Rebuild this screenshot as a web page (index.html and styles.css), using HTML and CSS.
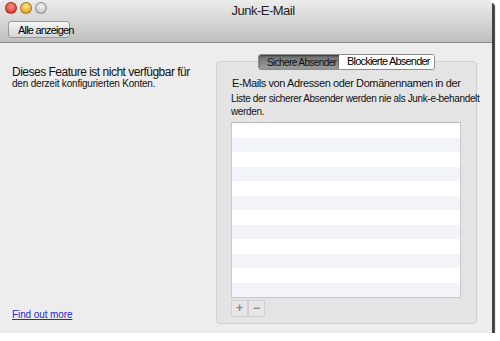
FILE: index.html
```html
<!DOCTYPE html>
<html lang="de">
<head>
    <meta charset="UTF-8">
    <title>Junk-E-Mail</title>
    <link rel="stylesheet" href="styles.css">
</head>
<body>
    <div class="window">
        <header class="toolbar">
            <div class="lights">
                <span class="light red"></span>
                <span class="light yellow"></span>
                <span class="light gray"></span>
            </div>
            <div class="title">Junk-E-Mail</div>
            <button class="tb-btn">Alle anzeigen</button>
        </header>

        <div class="content">
            <div class="side">
                <p class="notice">Dieses Feature ist nicht verfügbar für</p>
                <p class="notice-small">den derzeit konfigurierten Konten.</p>
                <a href="#" class="more">Find out more</a>
            </div>

            <div class="group">
                <div class="tabs">
                    <span class="tab active">Sichere Absender</span>
                    <span class="tab">Blockierte Absender</span>
                </div>
                <p class="info-1">E-Mails von Adressen oder Domänennamen in der</p>
                <p class="info-2">Liste der sicherer Absender werden nie als Junk-e-behandelt<br>werden.</p>
                <ul class="list">
                    <li></li><li></li><li></li><li></li><li></li><li></li>
                    <li></li><li></li><li></li><li></li><li></li><li></li>
                </ul>
                <div class="pm">
                    <button class="pm-btn">+</button>
                    <button class="pm-btn">&minus;</button>
                </div>
            </div>
        </div>
    </div>
</body>
</html>
```

FILE: styles.css
```css
body {
    margin: 0;
    background: #fff;
    font-family: 'Liberation Sans', Arial, sans-serif;
    color: #111;
}

.window {
    width: 492px;
    height: 333px;
    background: #ededed;
    border-radius: 4px 4px 0 0;
    box-shadow: 3px 3px 1px rgba(0, 0, 0, 0.75);
    display: flex;
    flex-direction: column;
    overflow: hidden;
}

.toolbar {
    position: relative;
    height: 42px;
    flex: none;
    background: linear-gradient(#ececec, #c0c0c0);
    border-bottom: 1px solid #8a8a8a;
}

.lights {
    position: absolute;
    left: 5px;
    top: 2px;
    display: flex;
    gap: 3px;
}

.light {
    width: 12px;
    height: 12px;
    border-radius: 50%;
    box-sizing: border-box;
    border: 1px solid rgba(0, 0, 0, 0.3);
}

.red { background: radial-gradient(circle at 50% 35%, #ff9c94, #e23b30 70%); }
.yellow { background: radial-gradient(circle at 50% 35%, #ffe49a, #e9a823 70%); }
.gray { background: radial-gradient(circle at 50% 35%, #f6f6f6, #c8c8c8 70%); }

.title {
    text-align: center;
    font-size: 13px;
    letter-spacing: -0.5px;
    padding-top: 3px;
    padding-left: 34px;
    color: #222;
}

.tb-btn {
    position: absolute;
    left: 8px;
    top: 21px;
    width: 62px;
    height: 17px;
    padding: 0 0 0 9px;
    text-align: left;
    white-space: nowrap;
    overflow: visible;
    font-family: inherit;
    font-size: 11px;
    letter-spacing: -0.8px;
    color: #000;
    border: 1px solid #9a9a9a;
    border-radius: 3px;
    background: linear-gradient(#f6f6f6, #d6d6d6);
}

.content {
    flex: 1;
    display: flex;
    padding: 0 15px 10px 12px;
}

.side {
    flex: none;
    width: 204px;
    display: flex;
    flex-direction: column;
    padding-top: 22px;
    white-space: nowrap;
}

.notice {
    margin: 0;
    font-size: 12px;
    line-height: 14px;
    letter-spacing: -0.5px;
}

.notice-small {
    margin: -1px 0 0;
    font-size: 10px;
    line-height: 12px;
    letter-spacing: -0.2px;
}

.more {
    margin-top: auto;
    margin-bottom: 4px;
    font-size: 10px;
    letter-spacing: -0.1px;
    color: #1a2bdc;
}

.group {
    position: relative;
    flex: 1;
    min-width: 0;
    margin-top: 18px;
    border: 1px solid #d0d0d0;
    border-radius: 4px;
    background: #e4e4e4;
    padding: 15px 15px 6px 14px;
    white-space: nowrap;
}

.tabs {
    position: absolute;
    top: -8px;
    left: 41px;
    display: flex;
    border: 1px solid #8c8c8c;
    border-radius: 3px;
    overflow: hidden;
}

.tab {
    height: 14px;
    line-height: 15px;
    background: #fff;
    color: #000;
    overflow: hidden;
}

.tab.active {
    width: 72px;
    padding-left: 8px;
    font-size: 10px;
    letter-spacing: -0.6px;
    background: linear-gradient(#6e6e6e, #9c9c9c);
    color: #111;
    box-shadow: inset 0 1px 2px rgba(0, 0, 0, 0.5);
}

.tab + .tab {
    width: 87px;
    padding-left: 8px;
    font-size: 11px;
    letter-spacing: -0.8px;
    line-height: 13px;
}

.info-1 {
    margin: 0 0 0 1px;
    font-size: 11px;
    line-height: 13px;
    letter-spacing: -0.4px;
}

.info-2 {
    margin: 2px 0 0;
    font-size: 10px;
    line-height: 13px;
    letter-spacing: -0.35px;
}

.list {
    list-style: none;
    margin: 4px 0 0;
    padding: 0;
    height: 174px;
    background: #fff;
    border: 1px solid #c8c8c8;
    border-top-color: #b8b8b8;
    overflow: hidden;
}

.list li {
    height: 14.5px;
}

.list li:nth-child(even) {
    background: #f3f4f9;
}

.pm {
    display: flex;
    margin-top: 2px;
}

.pm-btn {
    width: 17px;
    height: 17px;
    padding: 0;
    font-family: inherit;
    font-size: 12px;
    font-weight: bold;
    line-height: 15px;
    color: #888;
    background: #e6e6e6;
    border: 1px solid #d0d0d0;
}
```
